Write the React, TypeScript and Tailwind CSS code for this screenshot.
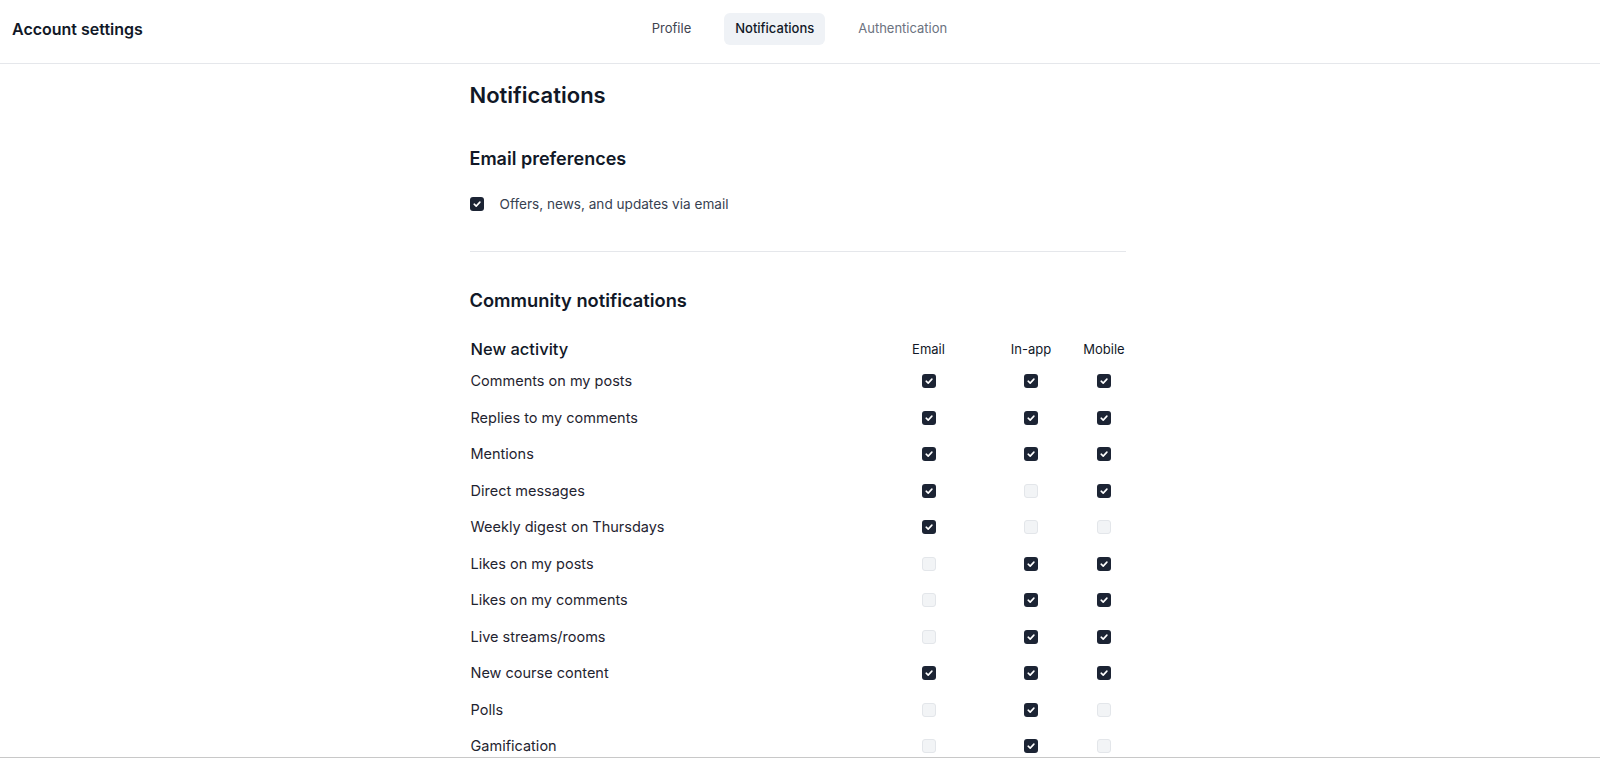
import React from "react";

type Row = { label: string; email: boolean; inapp: boolean; mobile: boolean };

const rows: Row[] = [
  { label: "Comments on my posts", email: true, inapp: true, mobile: true },
  { label: "Replies to my comments", email: true, inapp: true, mobile: true },
  { label: "Mentions", email: true, inapp: true, mobile: true },
  { label: "Direct messages", email: true, inapp: false, mobile: true },
  { label: "Weekly digest on Thursdays", email: true, inapp: false, mobile: false },
  { label: "Likes on my posts", email: false, inapp: true, mobile: true },
  { label: "Likes on my comments", email: false, inapp: true, mobile: true },
  { label: "Live streams/rooms", email: false, inapp: true, mobile: true },
  { label: "New course content", email: true, inapp: true, mobile: true },
  { label: "Polls", email: false, inapp: true, mobile: false },
  { label: "Gamification", email: false, inapp: true, mobile: false },
];

function Check({ on }: { on: boolean }) {
  if (on) {
    return (
      <span className="flex h-[14px] w-[14px] items-center justify-center rounded-[3px] bg-[#1c2434]">
        <svg width="10" height="10" viewBox="0 0 10 10" fill="none">
          <path d="M2.2 5.2 L4.2 7.1 L7.9 3.1" stroke="white" strokeWidth="1.6" strokeLinecap="round" strokeLinejoin="round" />
        </svg>
      </span>
    );
  }
  return <span className="block h-[14px] w-[14px] rounded-[3px] border border-[#e3e6ea] bg-[#f2f4f6]" />;
}

export default function App() {
  return (
    <div className="h-screen overflow-hidden bg-white font-['Inter',sans-serif] text-gray-900">
      <header className="flex h-[64px] border-b border-[#e5e7eb] pt-[13px] pr-[13px]">
        <div className="flex h-8 flex-1 items-center pl-3 text-base font-semibold text-[#111827]">Account settings</div>
        <nav className="flex h-8 items-center gap-[22px] text-[13px]">
          <span className="flex h-8 items-center rounded-md px-[11px] text-[#3f4450]">Profile</span>
          <span className="flex h-8 items-center rounded-md bg-[#eff2f6] px-[11px] font-medium text-[#111827]">Notifications</span>
          <span className="flex h-8 items-center rounded-md px-[11px] text-[#6b7280]">Authentication</span>
        </nav>
        <div className="flex-1" />
      </header>
      <main className="pr-[5px]">
        <div className="mx-auto w-[656px] pt-[17px]">
          <h1 className="text-[22px] font-semibold leading-7 text-[#111827]">Notifications</h1>
          <h2 className="mt-9 text-lg font-semibold leading-7 text-[#111827]">Email preferences</h2>
          <label className="mt-[21px] flex h-5 items-center gap-4">
            <Check on={true} />
            <span className="text-[13.6px] text-[#374151]">Offers, news, and updates via email</span>
          </label>
          <div className="mt-[37px] border-t border-[#e5e7eb]" />
          <h2 className="mt-[34px] text-[18.3px] font-semibold leading-7 text-[#111827]">Community notifications</h2>
          <div className="mt-[23px]">
            <div className="grid h-6 grid-cols-[1fr_102px_103px_43px] items-center">
              <span className="pl-[1px] text-[16.5px] font-medium text-[#111827]">New activity</span>
              <span className="text-center text-[13px] text-[#111827]">Email</span>
              <span className="text-center text-[13px] text-[#111827]">In-app</span>
              <span className="text-center text-[13px] text-[#111827]">Mobile</span>
            </div>
            <div className="mt-[2px]">
              {rows.map((r) => (
                <div key={r.label} className="grid h-[36.5px] grid-cols-[1fr_102px_103px_43px] items-center">
                  <span className="pl-[1px] text-[14.5px] text-[#1f2430]">{r.label}</span>
                  <span className="flex justify-center"><Check on={r.email} /></span>
                  <span className="flex justify-center"><Check on={r.inapp} /></span>
                  <span className="flex justify-center"><Check on={r.mobile} /></span>
                </div>
              ))}
            </div>
          </div>
        </div>
      </main>
      <div className="fixed bottom-0 left-0 right-0 h-px bg-[#c8c8c8]" />
    </div>
  );
}
